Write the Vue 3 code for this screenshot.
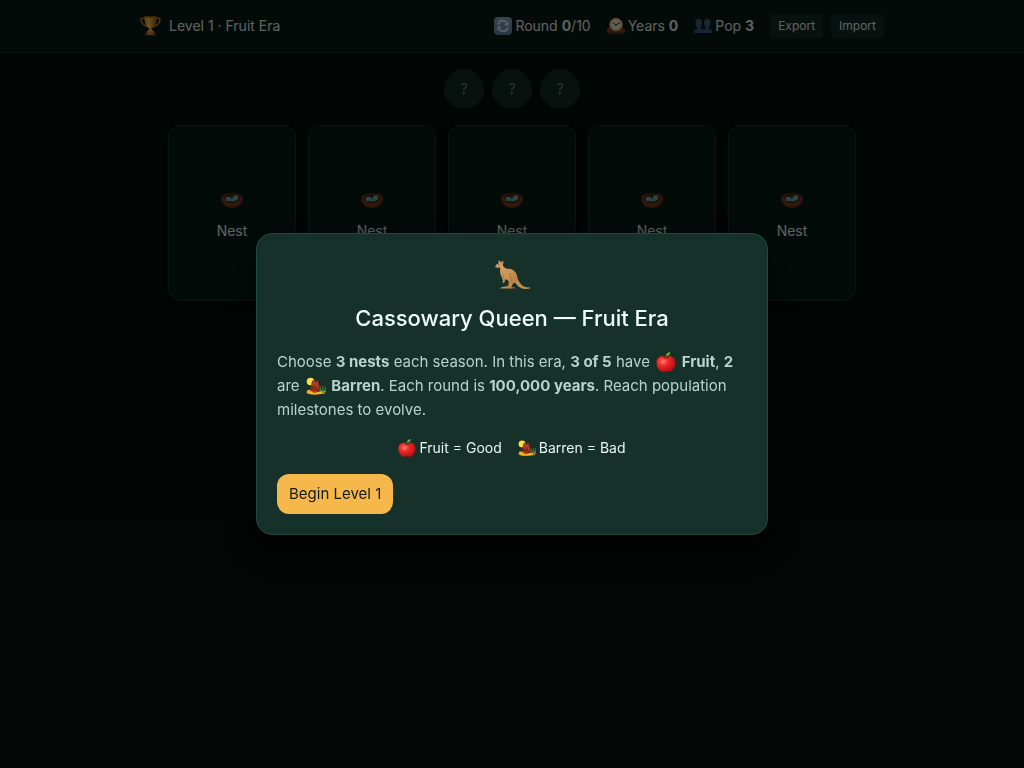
<script setup>
import { ref } from 'vue'

const level = ref(1)
const round = ref(0)
const years = ref(0)
const population = ref(3)
const picks = ['first', 'second', 'third']
const nests = [1, 2, 3, 4, 5]
const introOpen = ref(true)
</script>

<template>
  <div class="page">
    <svg class="sprite" aria-hidden="true">
      <defs>
        <linearGradient id="gold" x1="0" x2="1" y1="0" y2="0">
          <stop offset="0" stop-color="#d98c16" />
          <stop offset=".35" stop-color="#ffd65c" />
          <stop offset=".6" stop-color="#e29a20" />
          <stop offset="1" stop-color="#a86409" />
        </linearGradient>
        <linearGradient id="blueTile" x1="0" x2="0" y1="0" y2="1">
          <stop offset="0" stop-color="#8caac8" />
          <stop offset="1" stop-color="#6485ab" />
        </linearGradient>
        <linearGradient id="people-fill" x1="0" x2="0" y1="0" y2="1">
          <stop offset="0" stop-color="#426589" />
          <stop offset="1" stop-color="#34547c" />
        </linearGradient>
        <radialGradient id="red" cx=".35" cy=".35" r=".75">
          <stop offset="0" stop-color="#ff806c" />
          <stop offset=".35" stop-color="#ee2b27" />
          <stop offset="1" stop-color="#a80a14" />
        </radialGradient>
        <linearGradient id="fur" x1="0" x2="1" y1="0" y2="1">
          <stop offset="0" stop-color="#dda766" />
          <stop offset=".55" stop-color="#cc9455" />
          <stop offset="1" stop-color="#ac753f" />
        </linearGradient>
        <symbol id="trophy" viewBox="0 0 22 22">
          <path d="M5 3H1.200C.7 7 2.700 10 8 11.500M17 3h3.800c.5 4-1.500 7-6.800 8.500" fill="none" stroke="#c88a20" stroke-width="1.500" />
          <path d="M4.500 1h13c0 6-1.500 10.500-5 12.500v3h-3v-3c-3.500-2-5-6.500-5-12.500z" fill="url(#gold)" />
          <ellipse cx="11" cy="1.500" rx="6.500" ry="1" fill="#9b640e" />
          <path d="M8.500 15.500h5l1.500 2h-8z" fill="#f4bd45" />
          <path d="M6 17h10v3.500H6z" fill="#a55324" />
          <path d="M8 18h6v1.500H8z" fill="#efbf65" />
          <path d="M5 20h12v1.500H5z" fill="#71351a" />
        </symbol>
        <symbol id="cycle" viewBox="0 0 18 18">
          <rect width="18" height="18" rx="4" fill="url(#blueTile)" />
          <path d="M4 7.500C5.200 3.200 10.300 2.600 13 5.500M14 10.500c-1.200 4.300-6.300 4.900-9 2" fill="none" stroke="#dce5ec" stroke-width="2" />
          <path d="M15.500 4.500 14 9.500l-4-2zM2.500 13.500 4 8.500l4 2z" fill="#dce5ec" />
        </symbol>
        <symbol id="clock" viewBox="0 0 18 18">
          <path d="M0 16.500v-4C3 11 3 6 4 4c2-4 8-4 10 0 1 2 1 7 4 8.500v4z" fill="#884323" />
          <path d="M0 15h18v2H0z" fill="#59301f" />
          <circle cx="9" cy="7.500" r="6.300" fill="#f3e9cf" stroke="#c69450" />
          <path d="M5.500 5.500 9 8l4-2.500" fill="none" stroke="#484238" stroke-width="1" />
          <circle cx="9" cy="8" r=".7" fill="#484238" />
        </symbol>
        <symbol id="people" viewBox="0 0 18 18">
          <g fill="url(#people-fill)">
            <path d="M1.500 5.500c0-5 6.500-5 6.500 0 0 2-1 4-1.500 4.500V12l3.500 1v3H0v-3l3-1v-2c-1-1-1.500-2.500-1.500-4.500z" />
            <path d="M10 5.500c0-5 6.500-5 6.500 0 0 2-.5 3.500-1.500 4.500v2l3 1v3H8v-3l3.500-1v-2c-.5-.5-1.500-2.500-1.500-4.500z" />
          </g>
        </symbol>
        <symbol id="nest" viewBox="0 0 22 16">
          <path d="M0 5C1 1 5 .5 11 .5S21 1 22 5c0 6-5 10-11 10S0 11 0 5z" fill="#6f381d" />
          <path d="M3 5c1-3 4-3.500 8-3.500S18 2 19 5c-1 4-4 5-8 5S4 9 3 5z" fill="#472414" />
          <ellipse cx="7.500" cy="6" rx="2.800" ry="2.200" fill="#69b1b8" />
          <ellipse cx="11.500" cy="7" rx="2.500" ry="1.700" fill="#5ba3ad" />
          <ellipse cx="14.500" cy="5" rx="2.800" ry="2.600" transform="rotate(-25 14.500 5)" fill="#69b1b8" />
          <path d="m1 5 5 5 5 1 6-1 4-5M3 10l6 3 9-3" fill="none" stroke="#8d4b27" stroke-width=".6" />
        </symbol>
        <symbol id="kangaroo" viewBox="0 0 36 30">
          <path d="M20 15c3 1 4 5 6 8s5 4.500 10 4.500v1C31 29.500 26 29 23 25l-4-5z" fill="#c18c50" />
          <path d="M16 18c2 3 1 4 2 6l-1 3h3.500l1 1.500H15l-1-1.500 2-3z" fill="#8f5b34" />
          <path d="m5 3-.7-2.500C6 .7 7 1.500 7 3L8.500.5C10 2 9.800 3 8.800 4.500 9 7 10.500 8 13 8.700c3.500-.4 7 .8 9 4.300 1.500 3 2.200 6 1 8-.8 1.500-2.500 2-4 2.500l-1.500 3.500.5 1.500H6.500c0-1.200 1-1.500 3-1.700l4.500-.8 1-4-2-2.500c-1 .5-1.500.5-2.500-.5l.5 2-1 2-1.500-.5.500-2-1.500-4C6 14 6 11.500 6.200 7.500L2 7.800 1 6.500l1.500-2z" fill="url(#fur)" />
          <path d="M8.500 13.500c0 2 1.500 3 1 5M16 13c-1 3 2 5 2 9" fill="none" stroke="#9d6835" stroke-width=".7" />
          <circle cx="4.800" cy="4.800" r=".6" fill="#362015" />
          <path d="M1 6.500h1.700L2 7.800z" fill="#60402e" />
          <path d="m8.700 1.500-.7 2" stroke="#8b5144" stroke-width=".7" />
        </symbol>
        <symbol id="apple" viewBox="0 0 20 20">
          <path d="M10 5c4-2 9-.5 9.500 5 .4 5-3.500 10-6.500 9.800-2-.3-4-.3-6 0C3.500 20 .3 15 .5 10 1 4.500 6 3 10 5z" fill="url(#red)" />
          <path d="M7 5.500c2-1.300 4-1.300 6 0-2 1.300-4 1.300-6 0z" fill="#8d1718" />
          <path d="M9.500 6c.1-1.500.6-2.500 1.500-3.500" stroke="#715b20" fill="none" />
          <path d="M10 4C10 1.500 11.500.5 14 0c.3 2.500-1 4-4 4z" fill="#65b526" />
        </symbol>
        <symbol id="desert" viewBox="0 0 20 18">
          <circle cx="4.500" cy="4.500" r="3.800" fill="#ffdd45" />
          <path d="M0 15 5 12 20 14l-2 3H2z" fill="#e19a22" />
          <path d="m4 14 1-5 1-5 2-1 1 2 1-1 3 1v3l2 1 1 5-4 1z" fill="#7d2b1c" />
          <path d="m6 9 2-5 1 5 2-4 1 7" fill="none" stroke="#b64824" stroke-width="1.200" />
          <path d="M1 13c4 0 5 2 9 2 3 0 5-1 8 1-5 2-11 2-15 1z" fill="#f1b52a" />
          <path d="m5 14 4-1 3 2-4 1z" fill="#b93919" />
          <path d="M17 16V9M14.500 11v2.500H17M19.500 10v3H17" fill="none" stroke="#3e7a33" stroke-width="1.200" stroke-linecap="round" />
        </symbol>
      </defs>
    </svg>

    <header class="topbar">
      <div class="topbar-inner">
        <div class="brand">
          <svg class="trophy"><use href="#trophy" /></svg>
          <span>Level {{ level }} · Fruit Era</span>
        </div>
        <div class="stats">
          <span class="stat"><svg class="emoji"><use href="#cycle" /></svg><span>Round <b>{{ round }}</b>/10</span></span>
          <span class="stat"><svg class="emoji"><use href="#clock" /></svg><span>Years <b>{{ years }}</b></span></span>
          <span class="stat"><svg class="emoji"><use href="#people" /></svg><span>Pop <b>{{ population }}</b></span></span>
          <div class="actions">
            <button type="button">Export</button>
            <button type="button">Import</button>
          </div>
        </div>
      </div>
    </header>

    <main class="board">
      <div class="picks">
        <span v-for="pick in picks" :key="pick" class="pick">?</span>
      </div>
      <div class="nests">
        <button v-for="nest in nests" :key="nest" type="button" class="nest">
          <span class="nest-icon"><svg><use href="#nest" /></svg></span>
          <span>Nest</span>
        </button>
      </div>
    </main>

    <div v-if="introOpen" class="overlay">
      <section class="dialog" role="dialog" aria-modal="true" aria-labelledby="intro-title">
        <div class="mascot"><svg><use href="#kangaroo" /></svg></div>
        <h2 id="intro-title">Cassowary Queen — Fruit Era</h2>
        <p>
          Choose <b>3 nests</b> each season. In this era, <b>3 of 5</b> have
          <b><svg class="inline-icon"><use href="#apple" /></svg> Fruit</b>, <b>2</b> are
          <b><svg class="inline-icon"><use href="#desert" /></svg> Barren</b>. Each round is
          <b>100,000 years</b>. Reach population milestones to evolve.
        </p>
        <div class="legend">
          <span><svg><use href="#apple" /></svg>Fruit = Good</span>
          <span><svg><use href="#desert" /></svg>Barren = Bad</span>
        </div>
        <button type="button" class="begin" @click="introOpen = false">Begin Level {{ level }}</button>
      </section>
    </div>
  </div>
</template>

<style>
body {
  margin: 0;
  background: #040f0c;
}
</style>

<style scoped>
* {
  box-sizing: border-box;
}
.page {
  min-height: 100vh;
  background: linear-gradient(#040f0c, #050f0d);
  color: #e8f5ef;
  font: 15px/24px Inter, "Liberation Sans", sans-serif;
}
button {
  font-family: inherit;
  color: inherit;
  border: 0;
  cursor: pointer;
}
.sprite {
  position: absolute;
  width: 0;
  height: 0;
}
.topbar {
  background: #091b16;
  border-bottom: 1px solid #11382c;
}
.topbar-inner {
  display: flex;
  align-items: center;
  justify-content: space-between;
  max-width: 768px;
  min-height: 52px;
  margin: 0 auto;
  padding: 8px 12px;
  font-size: 14px;
  line-height: 20px;
}
.brand {
  display: flex;
  align-items: center;
  gap: 8px;
}
.trophy {
  width: 21px;
  height: 22px;
}
.stats {
  display: flex;
  align-items: center;
  gap: 16px;
}
.stat {
  display: flex;
  align-items: center;
  gap: 3px;
}
.emoji {
  width: 18px;
  height: 18px;
}
.actions {
  display: flex;
  gap: 8px;
}
.actions button {
  padding: 4px 8px;
  border-radius: 4px;
  background: #122b23;
  font-size: 12px;
  line-height: 16px;
}
.board {
  max-width: 720px;
  margin: 0 auto;
  padding: 16px;
}
.picks {
  display: flex;
  justify-content: center;
  gap: 8px;
  margin-bottom: 16px;
}
.pick {
  display: flex;
  align-items: center;
  justify-content: center;
  width: 40px;
  height: 40px;
  border: 1px solid #142e27;
  border-radius: 50%;
  background: #122b23;
  color: #7c8b86;
  font-size: 14px;
}
.nests {
  display: grid;
  grid-template-columns: repeat(5, 1fr);
  gap: 12px;
}
.nest {
  display: flex;
  flex-direction: column;
  align-items: center;
  justify-content: center;
  gap: 4px;
  min-height: 176px;
  padding: 12px;
  border: 1px solid #11372b;
  border-radius: 12px;
  background: #081c17;
  box-shadow: 0 4px 12px rgba(0, 0, 0, 0.6);
  font-size: 14px;
  line-height: 20px;
}
.nest-icon {
  display: flex;
  align-items: center;
  height: 32px;
}
.nest-icon svg {
  width: 22px;
  height: 16px;
}
.overlay {
  position: fixed;
  inset: 0;
  display: flex;
  align-items: center;
  justify-content: center;
  padding: 16px;
  background: rgba(0, 0, 0, 0.6);
}
.dialog {
  width: 100%;
  max-width: 512px;
  padding: 20px;
  border: 1px solid #1d4a3d;
  border-radius: 16px;
  background: #16302a;
  box-shadow: 0 12px 32px rgba(0, 0, 0, 0.7);
}
.mascot {
  display: flex;
  align-items: center;
  justify-content: center;
  height: 40px;
  margin-bottom: 8px;
  padding-top: 2px;
}
.mascot svg {
  width: 36px;
  height: 30px;
}
h2 {
  margin: 0 0 16px;
  color: #effcf7;
  font-size: 22px;
  font-weight: 500;
  line-height: 32px;
  text-align: center;
}
p {
  margin: 0 0 16px;
  color: #b5d5ca;
}
.inline-icon {
  width: 20px;
  height: 20px;
  margin: 0 2px;
  vertical-align: -5px;
}
.legend {
  display: flex;
  justify-content: center;
  gap: 16px;
  margin-bottom: 16px;
  color: #e8f5ef;
  font-size: 14px;
  line-height: 20px;
}
.legend span {
  display: flex;
  align-items: center;
  gap: 3px;
}
.legend svg {
  width: 18px;
  height: 18px;
}
.begin {
  display: block;
  padding: 8px 12px;
  border-radius: 12px;
  background: #f7b84b;
  color: #111b15;
  font-size: 15px;
  line-height: 24px;
}
</style>
